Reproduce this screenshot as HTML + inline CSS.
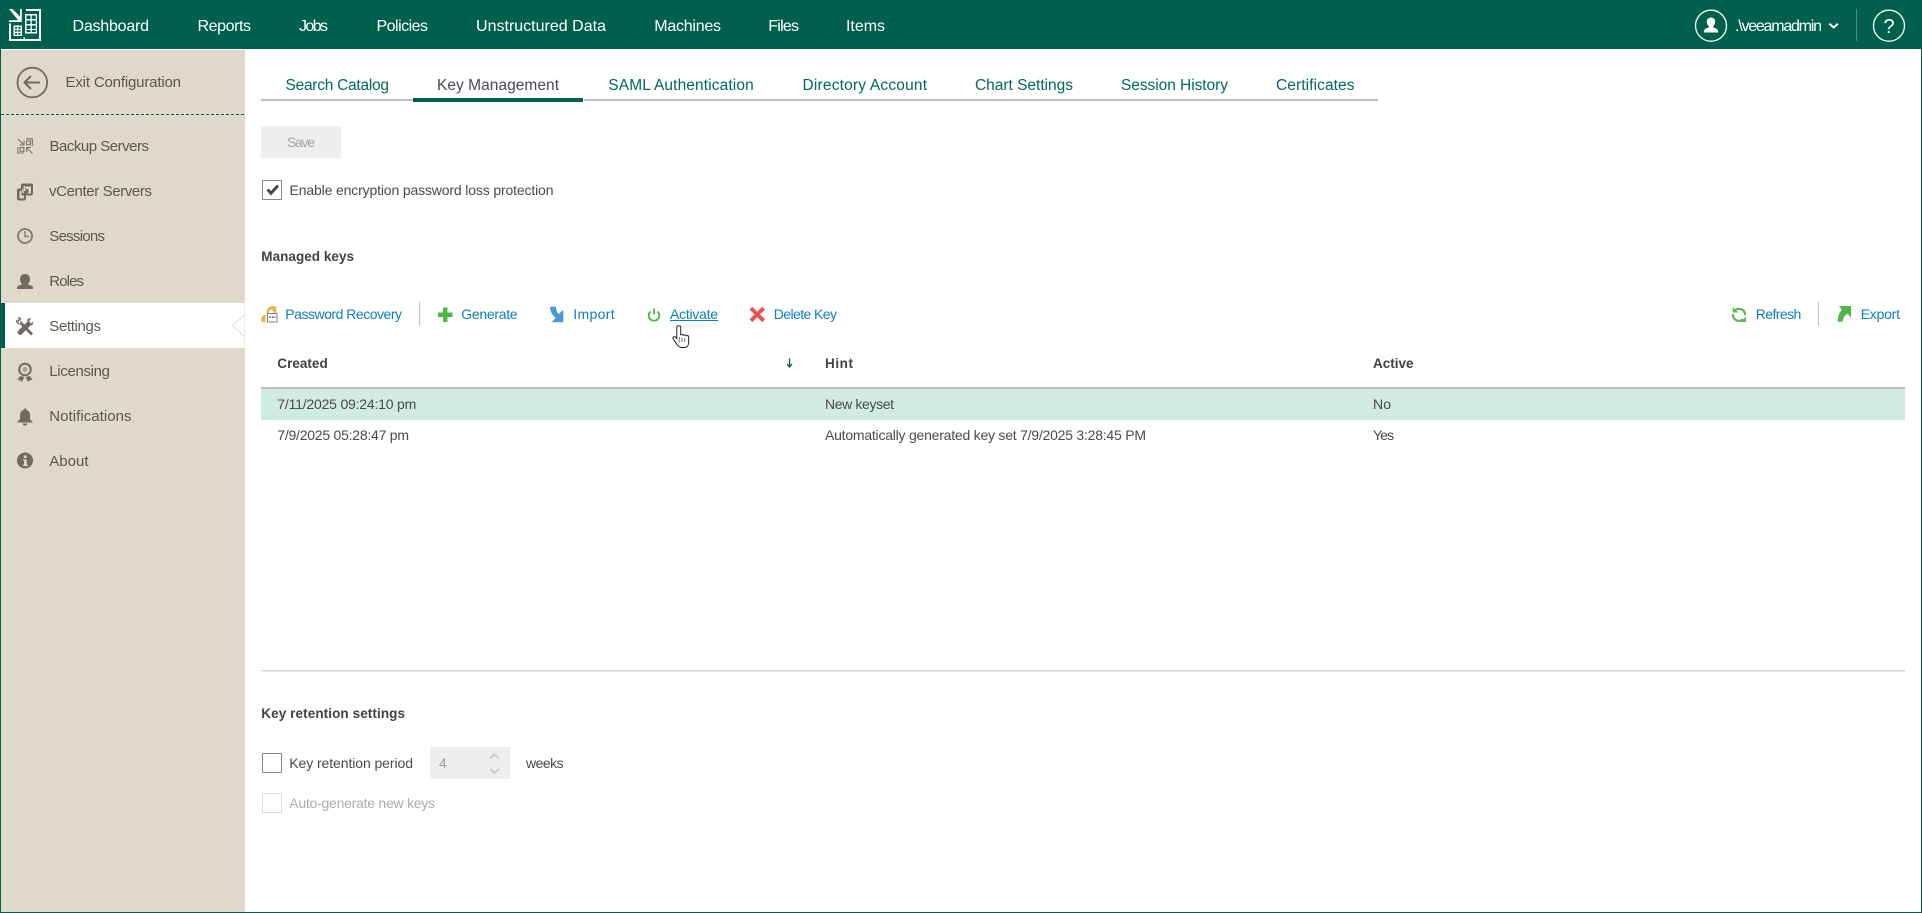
<!DOCTYPE html>
<html lang="en">
<head>
<meta charset="utf-8">
<title>Key Management</title>
<style>
html,body{margin:0;padding:0;background:#fff;width:1922px;height:913px;overflow:hidden}
svg{display:block;font-family:"Liberation Sans",Arial,sans-serif}
.nav{font-size:16px;fill:#fff}
.side{font-size:15px;fill:#5c584e}
.tab{font-size:15.5px;fill:#00695c}
.c{font-size:14px;fill:#4a4a4a}
.b{font-size:13.5px;font-weight:bold;fill:#424242}
.l{font-size:14px;fill:#0f7db8}
.i{fill:#6f6b60}
</style>
</head>
<body>
<svg width="1922" height="913" viewBox="0 0 1922 913" xmlns="http://www.w3.org/2000/svg">
<rect width="1922" height="913" fill="#fff"/>
<!-- frame -->
<rect x="0" y="0" width="1" height="913" fill="#00604d"/>
<rect x="1921" y="0" width="1" height="913" fill="#00604d"/>
<rect x="0" y="912" width="1922" height="1" fill="#00604d"/>
<!-- header -->
<rect width="1922" height="49" fill="#00604d"/>
<g fill="#fff">
<path d="M9 9h3.500l7.500 7.500V9h1.800v13H9v-1.800h9.200z"/>
<path d="M26 9h15v32H9V23.500h2V39h12.500v-1.500H25V39h14V11H26z"/>
<path d="M13.500 25.500h8.500v10.500h-8.500zM15 27v1.800h2.200V27zm3.200 0v1.800h2.300V27zM15 30v1.800h2.200V30zm3.200 0v1.800h2.300V30zM15 33v1.700h2.200V33zm3.200 0v1.700h2.300V33z" fill-rule="evenodd"/>
<path d="M25 14h12v19.500H25zM26.500 15.500V19h4v-3.500zm5.300 0V19h4v-3.500zM26.500 20.500V24h4v-3.500zm5.300 0V24h4v-3.500zM26.500 25.500V29h4v-3.500zm5.300 0V29h4v-3.500zM26.500 30v2h4v-2zm5.300 0v2h4v-2z" fill-rule="evenodd"/>
</g>
<text class="nav" x="72.500" y="31" textLength="76.500">Dashboard</text>
<text class="nav" x="197.500" y="31" textLength="53.500">Reports</text>
<text class="nav" x="299" y="31" textLength="29">Jobs</text>
<text class="nav" x="376.500" y="31" textLength="51.500">Policies</text>
<text class="nav" x="476" y="31" textLength="130">Unstructured Data</text>
<text class="nav" x="654.300" y="31" textLength="66.700">Machines</text>
<text class="nav" x="768.300" y="31" textLength="30.700">Files</text>
<text class="nav" x="846" y="31" textLength="39">Items</text>
<!-- user -->
<circle cx="1711" cy="25.700" r="15.500" fill="none" stroke="#fff" stroke-width="1.300"/>
<path d="M1711 17.500c2.700 0 4.200 2 4.200 4.400 0 1.900-.9 3.400-2 4.300v1.300c2.600.7 4.800 1.700 4.800 3.300v1.700h-14v-1.700c0-1.600 2.200-2.600 4.800-3.300v-1.300c-1.100-.9-2-2.400-2-4.300 0-2.400 1.500-4.400 4.200-4.400z" fill="#fff"/>
<text class="nav" x="1735" y="31" textLength="87">.\veeamadmin</text>
<path d="M1829.500 23.800l4.200 3.700 4.200-3.700" fill="none" stroke="#fff" stroke-width="2"/>
<rect x="1856" y="9" width="1" height="32" fill="#4b8a7b"/>
<circle cx="1889" cy="25.700" r="15.500" fill="none" stroke="#fff" stroke-width="1.300"/>
<text x="1889" y="33" text-anchor="middle" font-size="20" fill="#fff">?</text>
<!-- sidebar -->
<rect x="1" y="50" width="244" height="862" fill="#dfd9cc"/>
<circle cx="32.300" cy="82.500" r="14.800" fill="none" stroke="#6f6b60" stroke-width="1.800"/>
<path d="M25 82.500h15M31 76l-6.500 6.500L31 89" fill="none" stroke="#6f6b60" stroke-width="2"/>
<text class="side" x="65.500" y="87" textLength="115.500">Exit Configuration</text>
<line x1="1" y1="114.500" x2="245" y2="114.500" stroke="#00604d" stroke-width="1" stroke-dasharray="3 2"/>
<!-- menu icons -->
<g fill="none" stroke="#7a766b" stroke-width="1.100">
<path d="M18 139l5.500 5.500M24 140.500V145h-4.500"/>
<path d="M26 138.800h6.300V146"/>
<rect x="26.500" y="141" width="3.800" height="3.800"/>
<path d="M17.800 147v6H24"/>
<rect x="20" y="147.500" width="3.800" height="3.800"/>
<path d="M32.500 153.500L27 148M26.500 152v-4.500H31"/>
</g>
<path d="M23 183.500h8a2 2 0 0 1 2 2v8a2 2 0 0 1-2 2h-5v3a2 2 0 0 1-2 2h-5a2 2 0 0 1-2-2v-8a2 2 0 0 1 2-2h2v-3a2 2 0 0 1 2-2zM23.500 186v5h-1.500v-2h2v4h-1.500v-2h3v-5zM26.500 193.500h4.500v-7h-5v2.500h1.500a1 1 0 0 1 1 1v2.500zM19.500 191v7.500h4.500v-3h-1.500a1 1 0 0 1-1-1v-3.500z" class="i" fill-rule="evenodd"/>
<circle cx="25" cy="236" r="7" fill="none" stroke="#858178" stroke-width="2"/>
<path d="M25 231v5.500h4" fill="none" stroke="#858178" stroke-width="1.500"/>
<path d="M25 274c3.200 0 5 2.400 5 5.200 0 2-.9 3.600-2 4.500v.8c2.800.7 5 1.500 5 2.900v1.600H17v-1.600c0-1.400 2.200-2.200 5-2.900v-.8c-1.100-.9-2-2.500-2-4.500 0-2.800 1.800-5.200 5-5.200z" class="i"/>
<!-- settings active -->
<rect x="0" y="303" width="5" height="45" fill="#00604d"/>
<rect x="5" y="303" width="239.500" height="45" fill="#fff"/>
<path d="M245 314.500l-12.500 11L245 337" fill="none" stroke="#e4dfd4" stroke-width="1"/>
<path d="M19 319l14 14.500-2 2L17 321z M21 318a4 4 0 0 0-3.500-.5l2.500 2.500-1.500 2-2.500-2.500a4 4 0 0 0 4 5z" class="i"/>
<path d="M31.500 318l-4 1v2.500l-10 10v1.500l2 2h1.500l10-10h1.500l1-3.500-2.500 2-2-2z" class="i"/>
<circle cx="25" cy="369.500" r="5.800" fill="none" stroke="#6f6b60" stroke-width="2"/>
<circle cx="25" cy="369.500" r="2.500" fill="#a7a399"/>
<path d="M20 376l-2.500 4 3 .2 1.300 2 2.500-5.200zM30 376l2.500 4-3 .2-1.300 2-2.500-5.200z" class="i"/>
<path d="M25 408.500c1 0 1.500.7 1.500 1.500 2.500.7 3.500 2.800 3.500 5.500v3.500l3 3.500H17l3-3.500v-3.500c0-2.700 1-4.800 3.500-5.500 0-.8.500-1.500 1.500-1.500zM22.500 423.500h5c-.3 1.200-1.300 2-2.500 2s-2.200-.8-2.500-2z" class="i"/>
<circle cx="25" cy="460.500" r="8" class="i"/>
<rect x="23.800" y="455.500" width="2.800" height="2.600" fill="#dfd9cc"/>
<path d="M23 459.500h3.700v5.300h1.100v1.300h-4.800v-1.300h1.100v-4h-1.100z" fill="#dfd9cc"/>
<text class="side" x="49.500" y="151" textLength="99.500">Backup Servers</text>
<text class="side" x="49" y="196" textLength="103">vCenter Servers</text>
<text class="side" x="49.300" y="241" textLength="55.700">Sessions</text>
<text class="side" x="49.300" y="286" textLength="34.700">Roles</text>
<text class="side" x="49.300" y="331" textLength="51.700">Settings</text>
<text class="side" x="49.300" y="376" textLength="60.700">Licensing</text>
<text class="side" x="49.300" y="421" textLength="82.200">Notifications</text>
<text class="side" x="49.300" y="466" textLength="39.200">About</text>
<!-- tabs -->
<rect x="261" y="99" width="1117" height="2" fill="#bdbdbd"/>
<rect x="413" y="98" width="170" height="4" fill="#00604d"/>
<rect x="583" y="98" width="1" height="4" fill="#fff"/>
<text class="tab" x="285.500" y="90" textLength="103.500">Search Catalog</text>
<text class="tab" x="437" y="90" textLength="122" style="fill:#454a55">Key Management</text>
<text class="tab" x="608.300" y="90" textLength="145.400">SAML Authentication</text>
<text class="tab" x="802.500" y="90" textLength="124.500">Directory Account</text>
<text class="tab" x="975" y="90" textLength="98">Chart Settings</text>
<text class="tab" x="1121" y="90" textLength="107">Session History</text>
<text class="tab" x="1276" y="90" textLength="78.500">Certificates</text>
<!-- save -->
<rect x="261" y="126" width="80" height="32" fill="#eee"/>
<text class="c" x="287" y="147" textLength="28" style="fill:#a3a3a3">Save</text>
<!-- checkbox -->
<rect x="262.500" y="180.500" width="19" height="19" fill="#fff" stroke="#8a8a8a"/>
<path d="M266.500 190.500l2-2 2.500 2.500 6-6.500 2 2-8 9z" fill="#444"/>
<text class="c" x="289.500" y="195" textLength="264">Enable encryption password loss protection</text>
<text class="b" x="261.300" y="261" textLength="92.700">Managed keys</text>
<!-- toolbar -->
<path d="M266.500 313c0-4 3-7 6.500-7 2 0 3.300.8 3.300.8V313h-2.500v-3.500c-2.400-.8-5 1-5 3.500z" fill="#e8b450"/>
<path d="M271 309l3 3v-3z" fill="#e8b450"/>
<path d="M261.300 322v-3.500c0-1.500 1.300-3.500 4.200-3.700V322z" fill="#e8b450"/>
<rect x="267.500" y="313.500" width="9.500" height="8.500" fill="#fff" stroke="#808080"/>
<path d="M269.500 316.500h1.500v1.500h-1.500zm2.500 0h1.500v1.500H272zm2.500 0h1v1.500h-1z" fill="#555"/>
<text class="l" x="285.300" y="319" textLength="116.700">Password Recovery</text>
<rect x="419" y="302" width="1" height="24" fill="#c2c2c2"/>
<path d="M443 307.500h4.500v5h5v4.500h-5v5H443v-5h-5v-4.500h5z" fill="#52b448"/>
<text class="l" x="461.300" y="319" textLength="56.300">Generate</text>
<path d="M550 306.700h6c.2 3 1 5.500 2.500 7.500l4.800-4.500v12.600h-11.800l4.200-4.300C552 315 550 311 550 306.700z" fill="#4a9ad4"/>
<text class="l" x="573.300" y="319" textLength="41.400">Import</text>
<path d="M650.500 311.500a5.300 5.300 0 1 0 7 0" fill="none" stroke="#52b448" stroke-width="1.800"/>
<rect x="653.200" y="308.500" width="1.800" height="6" fill="#52b448"/>
<text class="l" x="670" y="319" textLength="48">Activate</text>
<rect x="670" y="320" width="48" height="1" fill="#0f7db8"/>
<path d="M749.500 309.500l2.800-2.800 4.900 4.900 5-4.900 2.800 2.800-5 4.900 5 4.900-2.800 2.800-5-4.900-4.900 4.900-2.800-2.800 5-4.900z" fill="#e65454"/>
<text class="l" x="773.700" y="319" textLength="63.300">Delete Key</text>
<path d="M676.800 327v11.500l-1.500-1.500c-1.200-1-3.200.3-2 2l3.600 5.300c1 1.700 2.400 3.200 5.100 3.200h2c3 0 4.700-2 4.700-5v-5.500c0-1.700-2-1.900-2.500-.7 0-1.700-2.200-1.900-2.800-.6 0-1.600-2.200-1.800-2.700-.5V327c0-1.600-3.900-1.600-3.900 0z" fill="#fff" stroke="#222" stroke-width="1"/>
<path d="M679.200 337v5M682 337.500v4.500M684.800 338v4" stroke="#222" stroke-width=".6"/>
<!-- refresh/export -->
<g fill="none" stroke="#5ab84e" stroke-width="2.200">
<path d="M1735.500 310A6 6 0 0 1 1745 315"/>
<path d="M1743 319.300A6 6 0 0 1 1733 314"/>
</g>
<path d="M1732.700 307l5.500 5.500h-5.500zM1746 322h-5.500l5.500-5.500z" fill="#5ab84e"/>
<text class="l" x="1755.700" y="319" textLength="45.600">Refresh</text>
<rect x="1818" y="302" width="1" height="24" fill="#c2c2c2"/>
<path d="M1837.700 321.700c0-5 1.500-9 4-12l-2.700-3.700H1851v11.500l-3.500-3.700c-3 2-4.500 4.500-5 7.900z" fill="#52b448"/>
<text class="l" x="1860.700" y="319" textLength="39.300">Export</text>
<!-- table -->
<text class="b" x="277.300" y="368" textLength="50.400">Created</text>
<path d="M789.500 358.500v8M787 364l2.500 3 2.500-3" fill="none" stroke="#00604d" stroke-width="1.300"/>
<text class="b" x="825" y="368" textLength="28">Hint</text>
<text class="b" x="1373" y="368" textLength="40.500">Active</text>
<rect x="261" y="387" width="1644" height="2" fill="#bdbdbd"/>
<rect x="261" y="389" width="1644" height="31" fill="#d0ebdf"/>
<text class="c" x="277.300" y="409" textLength="139">7/11/2025 09:24:10 pm</text>
<text class="c" x="825" y="409" textLength="69">New keyset</text>
<text class="c" x="1373" y="409" textLength="18">No</text>
<text class="c" x="277.300" y="440" textLength="131.700">7/9/2025 05:28:47 pm</text>
<text class="c" x="825" y="440" textLength="321">Automatically generated key set 7/9/2025 3:28:45 PM</text>
<text class="c" x="1373" y="440" textLength="21">Yes</text>
<rect x="261" y="670" width="1644" height="1.500" fill="#d4d4d4"/>
<!-- retention -->
<text class="b" x="261.300" y="718" textLength="143.700">Key retention settings</text>
<rect x="262.500" y="753.500" width="19" height="19" fill="#fff" stroke="#8a8a8a"/>
<text class="c" x="289.300" y="768" textLength="123.700">Key retention period</text>
<rect x="430" y="747" width="80" height="32" fill="#eee"/>
<text class="c" x="439" y="768" textLength="7" style="fill:#a0a0a0">4</text>
<path d="M490 758.500l4.500-4 4.500 4M490 769l4.500 4 4.500-4" fill="none" stroke="#c6c6c6" stroke-width="1.800"/>
<text class="c" x="526" y="768" textLength="37.600">weeks</text>
<rect x="262.500" y="793.500" width="19" height="19" fill="#fff" stroke="#dcdcdc"/>
<text class="c" x="289.300" y="808" textLength="145.700" style="fill:#ababab">Auto-generate new keys</text>
</svg>
</body>
</html>
